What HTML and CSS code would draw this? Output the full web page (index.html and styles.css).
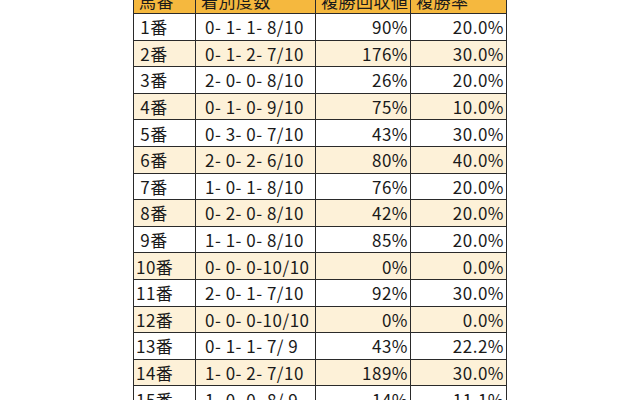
FILE: index.html
```html
<!DOCTYPE html>
<html lang="ja">
<head>
<meta charset="utf-8">
<link rel="stylesheet" href="styles.css">
</head>
<body>
<table class="stats">
<colgroup><col class="c1"><col class="c2"><col class="c3"><col class="c4"></colgroup>
<thead>
<tr><th>馬番</th><th>着別度数</th><th>複勝回収値</th><th>複勝率</th></tr>
</thead>
<tbody>
<tr><td class="num"> 1番</td><td class="rec">0- 1- 1- 8/10</td><td class="r">90%</td><td class="r">20.0%</td></tr>
<tr><td class="num"> 2番</td><td class="rec">0- 1- 2- 7/10</td><td class="r">176%</td><td class="r">30.0%</td></tr>
<tr><td class="num"> 3番</td><td class="rec">2- 0- 0- 8/10</td><td class="r">26%</td><td class="r">20.0%</td></tr>
<tr><td class="num"> 4番</td><td class="rec">0- 1- 0- 9/10</td><td class="r">75%</td><td class="r">10.0%</td></tr>
<tr><td class="num"> 5番</td><td class="rec">0- 3- 0- 7/10</td><td class="r">43%</td><td class="r">30.0%</td></tr>
<tr><td class="num"> 6番</td><td class="rec">2- 0- 2- 6/10</td><td class="r">80%</td><td class="r">40.0%</td></tr>
<tr><td class="num"> 7番</td><td class="rec">1- 0- 1- 8/10</td><td class="r">76%</td><td class="r">20.0%</td></tr>
<tr><td class="num"> 8番</td><td class="rec">0- 2- 0- 8/10</td><td class="r">42%</td><td class="r">20.0%</td></tr>
<tr><td class="num"> 9番</td><td class="rec">1- 1- 0- 8/10</td><td class="r">85%</td><td class="r">20.0%</td></tr>
<tr><td class="num">10番</td><td class="rec">0- 0- 0-10/10</td><td class="r">0%</td><td class="r">0.0%</td></tr>
<tr><td class="num">11番</td><td class="rec">2- 0- 1- 7/10</td><td class="r">92%</td><td class="r">30.0%</td></tr>
<tr><td class="num">12番</td><td class="rec">0- 0- 0-10/10</td><td class="r">0%</td><td class="r">0.0%</td></tr>
<tr><td class="num">13番</td><td class="rec">0- 1- 1- 7/ 9</td><td class="r">43%</td><td class="r">22.2%</td></tr>
<tr><td class="num">14番</td><td class="rec">1- 0- 2- 7/10</td><td class="r">189%</td><td class="r">30.0%</td></tr>
<tr><td class="num">15番</td><td class="rec">1- 0- 0- 8/ 9</td><td class="r">14%</td><td class="r">11.1%</td></tr>
</tbody>
</table>
</body>
</html>
```
FILE: styles.css
```css
html, body {
  margin: 0;
  padding: 0;
  background: #ffffff;
}
body {
  overflow: hidden;
  font-family: "Noto Sans CJK JP", "Noto Sans", sans-serif;
  color: #1a1a1a;
}
.stats {
  border-collapse: collapse;
  table-layout: fixed;
  width: 373px;
  margin: -14px auto 0;
  font-size: 17px;
  line-height: 1;
  letter-spacing: 0.5px;
}
.c1 { width: 62px; }
.c2 { width: 120px; }
.c3 { width: 95px; }
.c4 { width: 96px; }
.stats th,
.stats td {
  border: 1px solid #2a2a2a;
  padding: 0 3px;
  white-space: pre;
  vertical-align: middle;
}
.stats thead tr {
  height: 27px;
}
.stats th {
  background: #f5b83e;
  font-weight: normal;
  text-align: left;
  padding-left: 5px;
}
.stats tbody tr {
  height: 26.6px;
}
.stats tbody tr:nth-child(even) td {
  background: #fdf1d8;
}
.stats td.num {
  padding-left: 2px;
}
.stats td.rec {
  padding-left: 9px;
}
.stats td.r {
  text-align: right;
  padding-right: 2px;
}
```
